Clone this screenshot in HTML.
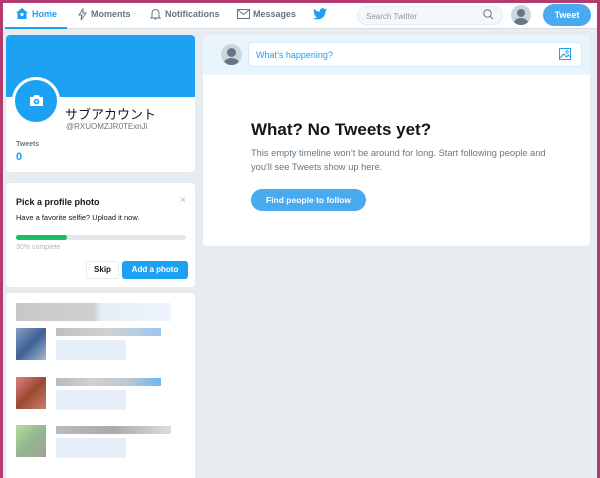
<!DOCTYPE html>
<html><head><meta charset="utf-8"><style>
*{box-sizing:border-box;margin:0;padding:0}
body{width:600px;height:478px;overflow:hidden;background:#b23c70;font-family:"Liberation Sans","Noto Sans CJK JP",sans-serif;position:relative}
#in{position:absolute;left:3px;top:3px;width:594px;height:475px;background:#e6ecf0;overflow:hidden}
.hd{position:absolute;left:0;top:0;width:594px;height:26px;background:#fff;border-bottom:1px solid #d8dde2}
.nav{position:absolute;top:6px;font-size:9px;font-weight:bold;color:#66757f}
.abs{position:absolute}
.card{position:absolute;background:#fff;border-radius:4px}
</style></head><body><div id="in">
<div class="hd">
 <svg class="abs" style="left:13px;top:5px" width="12" height="11" viewBox="0 0 12 11"><path d="M6 0L0 5h1.5v6h9V5H12z" fill="#1da1f2"/><circle cx="6" cy="6.5" r="1.6" fill="#fff"/></svg>
 <div class="nav" style="left:29px;color:#1da1f2">Home</div>
 <div class="abs" style="left:2px;top:24px;width:62px;height:2px;background:#1da1f2"></div>
 <svg class="abs" style="left:75px;top:5px" width="9" height="13" viewBox="0 0 9 13"><path d="M5 1L1 7h3l-1 5 5-7H5z" fill="none" stroke="#66757f" stroke-width="1"/></svg>
 <div class="nav" style="left:88px">Moments</div>
 <svg class="abs" style="left:147px;top:5px" width="11" height="12" viewBox="0 0 11 12"><path d="M2 9V5a3.5 3.5 0 017 0v4l1 1H1zM4.5 11h2" fill="none" stroke="#66757f"/></svg>
 <div class="nav" style="left:162px">Notifications</div>
 <svg class="abs" style="left:234px;top:6px" width="13" height="10" viewBox="0 0 13 10"><rect x=".5" y=".5" width="12" height="9" fill="none" stroke="#66757f"/><path d="M.5 .5l6 5 6-5" fill="none" stroke="#66757f"/></svg>
 <div class="nav" style="left:250px">Messages</div>
 <svg class="abs" style="left:310px;top:5px" width="14" height="12" viewBox="0 0 24 20"><path d="M24 2.4a10 10 0 01-2.8.8A5 5 0 0023.3.5a10 10 0 01-3.1 1.2A4.9 4.9 0 0011.8 6 14 14 0 011.7.9a4.9 4.9 0 001.5 6.6A4.9 4.9 0 011 6.9a4.9 4.9 0 003.9 4.8 5 5 0 01-2.2.1 4.9 4.9 0 004.6 3.4A9.9 9.9 0 010 17.3 14 14 0 007.5 19.5c9 0 14-7.5 14-14v-.6A10 10 0 0024 2.4z" fill="#1da1f2"/></svg>
 <div class="abs" style="left:354px;top:3px;width:146px;height:19px;border-radius:10px;background:#f5f8fa;border:1px solid #e6ecf0;font-size:8px;color:#8899a6;padding:5px 0 0 8px">Search Twitter</div>
 <svg class="abs" style="left:480px;top:6px" width="11" height="11" viewBox="0 0 11 11"><circle cx="4.5" cy="4.5" r="3.7" fill="none" stroke="#66757f"/><path d="M7.2 7.2L10 10" stroke="#66757f"/></svg>
 <div class="abs" style="left:508px;top:2px;width:20px;height:20px;border-radius:50%;background:#ccd6dd;overflow:hidden"><div class="abs" style="left:6px;top:4px;width:8px;height:8px;border-radius:50%;background:#657786"></div><div class="abs" style="left:3px;top:13px;width:14px;height:10px;border-radius:50%;background:#657786"></div></div>
 <div class="abs" style="left:540px;top:1px;width:48px;height:22px;border-radius:11px;background:#4aaaf0;color:#fff;font-size:9px;font-weight:bold;text-align:center;line-height:22px">Tweet</div>
</div>

<div class="card" style="left:3px;top:32px;width:189px;height:137px;overflow:hidden">
 <div style="height:62px;background:#1da1f2"></div>
 <div class="abs" style="left:6px;top:42px;width:48px;height:48px;border-radius:50%;background:#1da1f2;border:3px solid #fff"></div>
 <svg class="abs" style="left:23px;top:59px" width="15" height="13" viewBox="0 0 15 13"><path d="M1 3h3l1.5-2h4L11 3h3v9H1z" fill="#fff"/><circle cx="7.5" cy="7.5" r="2.8" fill="#1da1f2"/><circle cx="7.5" cy="7.5" r="1.2" fill="#fff"/></svg>
 <div class="abs" style="left:59px;top:69px;font-size:13px;color:#14171a">サブアカウント</div>
 <div class="abs" style="left:60px;top:87px;font-size:8px;color:#657786">@RXUOMZJR0TExnJi</div>
 <div class="abs" style="left:10px;top:106px;font-size:7px;font-weight:bold;color:#657786">Tweets</div>
 <div class="abs" style="left:10px;top:116px;font-size:11px;font-weight:bold;color:#1da1f2">0</div>
</div>

<div class="card" style="left:3px;top:180px;width:189px;height:104px">
 <div class="abs" style="left:10px;top:14px;font-size:9px;font-weight:bold;color:#14171a">Pick a profile photo</div>
 <div class="abs" style="left:174px;top:12px;font-size:10px;color:#aab8c2">×</div>
 <div class="abs" style="left:10px;top:30px;font-size:7.5px;color:#14171a">Have a favorite selfie? Upload it now.</div>
 <div class="abs" style="left:10px;top:52px;width:170px;height:5px;border-radius:3px;background:#e1e8ed"><div style="width:51px;height:5px;border-radius:3px;background:#17bf63"></div></div>
 <div class="abs" style="left:10px;top:61px;font-size:7px;color:#aab8c2">30% complete</div>
 <div class="abs" style="left:80px;top:78px;width:33px;height:18px;border:1px solid #e6ecf0;border-radius:3px;font-size:8px;font-weight:bold;text-align:center;line-height:16px;color:#14171a">Skip</div>
 <div class="abs" style="left:116px;top:78px;width:66px;height:18px;border-radius:3px;background:#1da1f2;font-size:8px;font-weight:bold;text-align:center;line-height:18px;color:#fff">Add a photo</div>
</div>

<div class="card" style="left:3px;top:290px;width:189px;height:190px">
 <div class="abs" style="left:10px;top:10px;width:155px;height:18px;background:linear-gradient(90deg,#c8c8c8 0,#d0d0d0 50%,#e5eef8 55%,#eef4fb 100%)"></div>
 <div class="abs" style="left:10px;top:35px;width:30px;height:32px;background:linear-gradient(135deg,#8aa0c4,#3d5f94,#a8b8d0)"></div>
 <div class="abs" style="left:50px;top:35px;width:105px;height:8px;background:linear-gradient(90deg,#c0c0c0,#d0d0d0,#9cc8f0)"></div>
 <div class="abs" style="left:50px;top:47px;width:70px;height:20px;background:#e6eff8"></div>
 <div class="abs" style="left:10px;top:84px;width:30px;height:32px;background:linear-gradient(135deg,#e08080,#9a4a30,#c88070)"></div>
 <div class="abs" style="left:50px;top:85px;width:105px;height:8px;background:linear-gradient(90deg,#bbb,#d0d0d0,#c0c8d0,#6ab8f0)"></div>
 <div class="abs" style="left:50px;top:97px;width:70px;height:20px;background:#e6eff8"></div>
 <div class="abs" style="left:10px;top:132px;width:30px;height:32px;background:linear-gradient(135deg,#c0d8a0,#90b890,#a0a090)"></div>
 <div class="abs" style="left:50px;top:133px;width:115px;height:8px;background:linear-gradient(90deg,#bbb,#aaa,#ddd)"></div>
 <div class="abs" style="left:50px;top:145px;width:70px;height:20px;background:#e6eff8"></div>
</div>

<div class="card" style="left:200px;top:32px;width:387px;height:211px;overflow:hidden">
 <div style="height:40px;background:#e8f5fd"></div>
 <div class="abs" style="left:18px;top:9px;width:21px;height:21px;border-radius:50%;background:#ccd6dd;overflow:hidden"><div class="abs" style="left:6px;top:4px;width:9px;height:9px;border-radius:50%;background:#657786"></div><div class="abs" style="left:3px;top:14px;width:15px;height:10px;border-radius:50%;background:#657786"></div></div>
 <div class="abs" style="left:45px;top:7px;width:334px;height:25px;border-radius:4px;background:#fff;border:1px solid #d8e8f4;font-size:9px;color:#1da1f2;padding:7px 0 0 7px">What’s happening?</div>
 <svg class="abs" style="left:356px;top:13px" width="12" height="12" viewBox="0 0 12 12"><rect x=".5" y=".5" width="11" height="11" fill="none" stroke="#1da1f2"/><circle cx="8" cy="4" r="1.2" fill="none" stroke="#1da1f2" stroke-width=".8"/><path d="M1 10l3.5-4 3 3 2-2 2 2.5" fill="none" stroke="#1da1f2"/></svg>
 <div class="abs" style="left:48px;top:85px;font-size:17px;font-weight:bold;color:#14171a">What? No Tweets yet?</div>
 <div class="abs" style="left:48px;top:111px;white-space:nowrap;font-size:9.3px;line-height:14px;color:#657786">This empty timeline won’t be around for long. Start following people and<br>you'll see Tweets show up here.</div>
 <div class="abs" style="left:48px;top:154px;width:115px;height:22px;border-radius:11px;background:#4aaaf0;color:#fff;font-size:8.5px;font-weight:bold;text-align:center;line-height:22px">Find people to follow</div>
</div>
</div></body></html>
